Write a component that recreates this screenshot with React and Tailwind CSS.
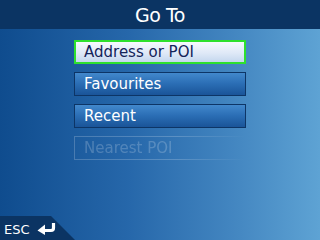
import React from 'react';

const items = [
    { label: 'Address or POI', state: 'selected' },
    { label: 'Favourites', state: 'normal' },
    { label: 'Recent', state: 'normal' },
    { label: 'Nearest POI', state: 'disabled' },
];

const styles = {
    selected:
        'border-2 border-[#2ee02e] bg-[linear-gradient(to_bottom,#f6f9ff,#dfe9f7_55%,#c4d7ee)] text-[#14245a] pl-[8px]',
    normal:
        'border border-[#0d3566] bg-[linear-gradient(to_bottom,#4288cc,#2a6db4_50%,#1a5498)] text-white pl-[9px]',
    disabled:
        'border border-white/20 text-white/20 pl-[9px] [mask-image:linear-gradient(to_right,black_60%,transparent)]',
};

const EnterArrow = () => (
    <svg width="20" height="12" viewBox="0 0 20 12" fill="none">
        <path d="M16.5 0.5 V5 Q16.5 7.5 14 7.5 H6" stroke="white" strokeWidth="3.2" strokeLinecap="round" />
        <path d="M0.5 7.5 L8 1.5 L8 12 Z" fill="white" />
    </svg>
);

export default function App() {
    return (
        <div
            className="w-[320px] h-[240px] flex flex-col overflow-hidden bg-[linear-gradient(to_right,#0f4c8e,#2667aa_40%,#4588c2_75%,#5ea3d4)]"
            style={{ fontFamily: '"DejaVu Sans", Verdana, sans-serif' }}
        >
            {/* Title bar */}
            <div className="h-[29px] bg-[#0b3463] flex items-center justify-center">
                <h1 className="text-white text-[19px] leading-none tracking-[-0.5px] pt-[1px]">Go To</h1>
            </div>

            {/* Menu */}
            <div className="flex flex-col gap-[8px] mt-[11px] ml-[74px]">
                {items.map((item) => (
                    <div
                        key={item.label}
                        className={`w-[172px] h-[24px] flex items-center text-[15px] leading-none ${styles[item.state]}`}
                    >
                        {item.label}
                    </div>
                ))}
            </div>

            {/* ESC tab */}
            <div className="mt-auto w-[75px] h-[24px] bg-[#0b3463] [clip-path:polygon(0_0,68%_0,100%_100%,0_100%)] flex items-center gap-[7px] pl-[4px] pt-[2px]">
                <span className="text-white text-[13px] leading-none">ESC</span>
                <EnterArrow />
            </div>
        </div>
    );
}
